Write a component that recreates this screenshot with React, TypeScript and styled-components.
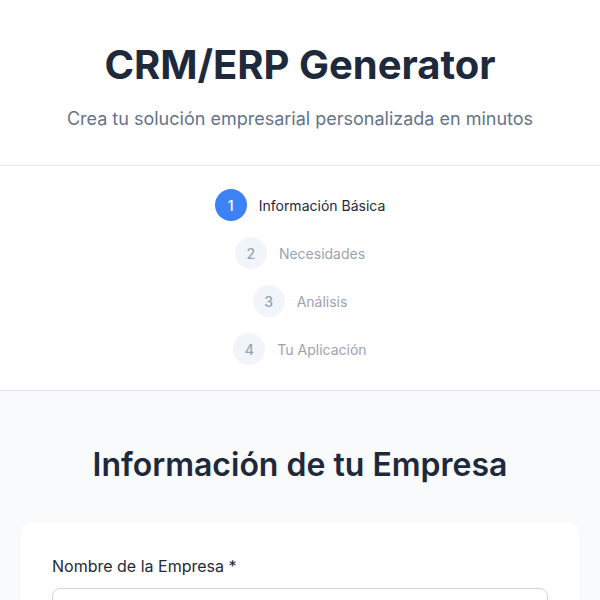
import styled, { createGlobalStyle } from 'styled-components';

const GlobalStyle = createGlobalStyle`
  * { box-sizing: border-box; }
  body {
    margin: 0;
    font-family: Inter, "Noto Sans", sans-serif;
    background: #f8fafc;
    color: #1e293b;
  }
`;

const steps = ['Información Básica', 'Necesidades', 'Análisis', 'Tu Aplicación'];

const Header = styled.header`
  background: #ffffff;
  padding: 41px 20px 32px;
  text-align: center;
  border-bottom: 1px solid #e5e7eb;
`;

const Title = styled.h1`
  margin: 0;
  font-size: 40px;
  line-height: 48px;
  font-weight: 700;
  color: #1e293b;
`;

const Subtitle = styled.p`
  margin: 16px 0 0;
  font-size: 18px;
  line-height: 28px;
  color: #64748b;
`;

const StepList = styled.nav`
  background: #ffffff;
  padding: 23px 20px 25px;
  display: flex;
  flex-direction: column;
  align-items: center;
  gap: 16px;
  border-bottom: 1px solid #e5e7eb;
`;

const Step = styled.div`
  display: flex;
  align-items: center;
  gap: 12px;
  height: 32px;
`;

const StepNumber = styled.span<{ $active?: boolean }>`
  width: 32px;
  height: 32px;
  border-radius: 50%;
  display: flex;
  align-items: center;
  justify-content: center;
  font-size: 14px;
  font-weight: 500;
  background: ${({ $active }) => ($active ? '#3b82f6' : '#f1f5f9')};
  color: ${({ $active }) => ($active ? '#ffffff' : '#94a3b8')};
`;

const StepLabel = styled.span<{ $active?: boolean }>`
  font-size: 14px;
  font-weight: 400;
  color: ${({ $active }) => ($active ? '#1e293b' : '#9ca3af')};
`;

const Main = styled.main`
  padding: 54px 20px 40px;
`;

const SectionTitle = styled.h2`
  margin: 0 0 37px;
  text-align: center;
  font-size: 32px;
  line-height: 40px;
  font-weight: 600;
  color: #1e293b;
`;

const Card = styled.div`
  background: #ffffff;
  border-radius: 12px;
  padding: 32px;
  box-shadow: 0 1px 3px rgba(15, 23, 42, 0.06);
`;

const Label = styled.label`
  display: block;
  font-size: 16px;
  line-height: 24px;
  font-weight: 400;
  color: #1f2937;
  margin-bottom: 10px;
`;

const Input = styled.input`
  width: 100%;
  height: 44px;
  border: 1px solid #d1d5db;
  border-radius: 8px;
  padding: 0 14px;
  font-family: inherit;
  font-size: 16px;
`;

export default function App() {
  return (
    <>
      <GlobalStyle />
      <Header>
        <Title>CRM/ERP Generator</Title>
        <Subtitle>Crea tu solución empresarial personalizada en minutos</Subtitle>
      </Header>
      <StepList>
        {steps.map((label, i) => (
          <Step key={label}>
            <StepNumber $active={i === 0}>{i + 1}</StepNumber>
            <StepLabel $active={i === 0}>{label}</StepLabel>
          </Step>
        ))}
      </StepList>
      <Main>
        <SectionTitle>Información de tu Empresa</SectionTitle>
        <Card>
          <Label>Nombre de la Empresa *</Label>
          <Input />
        </Card>
      </Main>
    </>
  );
}
